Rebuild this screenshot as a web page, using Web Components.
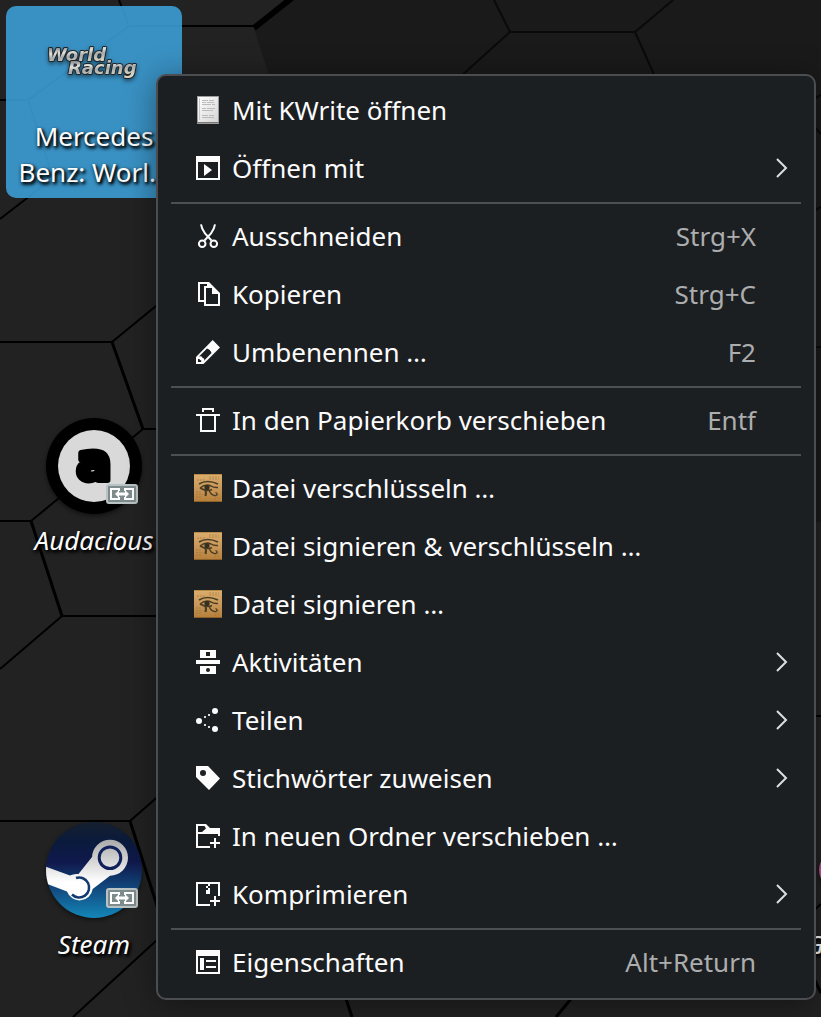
<!DOCTYPE html>
<html lang="de">
<head>
<meta charset="utf-8">
<meta name="viewport" content="width=device-width, initial-scale=1">
<title>Desktop</title>
<style>
  html, body {
    height: 100%;
    margin: 0;
  }
  body {
    background: #222;
    color: #fcfcfc;
    font: 26px/36px "Noto Sans", "Open Sans", sans-serif;
    overflow: hidden;
  }
</style>
</head>
<body>
<desktop-view>
  <desktop-icon icon="racing" row="1" selected>Mercedes Benz: Worl…</desktop-icon>
  <desktop-icon icon="audacious" row="3" link>Audacious</desktop-icon>
  <desktop-icon icon="steam" row="5" link>Steam</desktop-icon>
  <desktop-icon icon="pink" row="5" column="5" link align="start">G</desktop-icon>

  <context-menu slot="menu" label="Dateiaktionen">
    <menu-entry icon="kwrite">Mit KWrite öffnen</menu-entry>
    <menu-entry icon="open-with" submenu>Öffnen mit</menu-entry>
    <menu-separator></menu-separator>
    <menu-entry icon="cut" shortcut="Strg+X">Ausschneiden</menu-entry>
    <menu-entry icon="copy" shortcut="Strg+C">Kopieren</menu-entry>
    <menu-entry icon="rename" shortcut="F2">Umbenennen …</menu-entry>
    <menu-separator></menu-separator>
    <menu-entry icon="trash" shortcut="Entf">In den Papierkorb verschieben</menu-entry>
    <menu-separator></menu-separator>
    <menu-entry icon="kleopatra">Datei verschlüsseln …</menu-entry>
    <menu-entry icon="kleopatra">Datei signieren &amp; verschlüsseln …</menu-entry>
    <menu-entry icon="kleopatra">Datei signieren …</menu-entry>
    <menu-entry icon="activities" submenu>Aktivitäten</menu-entry>
    <menu-entry icon="share" submenu>Teilen</menu-entry>
    <menu-entry icon="tag" submenu>Stichwörter zuweisen</menu-entry>
    <menu-entry icon="folder-new">In neuen Ordner verschieben …</menu-entry>
    <menu-entry icon="compress" submenu>Komprimieren</menu-entry>
    <menu-separator></menu-separator>
    <menu-entry icon="properties" shortcut="Alt+Return">Eigenschaften</menu-entry>
  </context-menu>
</desktop-view>

<script>
// 28x28 menu icons
const MENU_ICONS = {
  "kwrite": `
    <defs><linearGradient id="p" x2="1" y2="1"><stop stop-color="#fff"/><stop offset="1" stop-color="#d5d5d5"/></linearGradient></defs>
    <rect x="3" y="0" width="22" height="28" fill="#9d9d9d"/>
    <rect x="4" y="1" width="20" height="25" fill="url(#p)"/>
    <path d="M3 26.5H25" stroke="#777"/>
    <path d="M8 4.5h6m1 0h5M8 6.5h4m1 0h7M8 8.5h9m1 0h3M8 12.5h4m1 0h8M8 14.5h11M8 19.5h6m1 0h5M8 21.5h12" stroke="#bbb" fill="none"/>
    <path d="M5.5 2v22" stroke="#c9c9c9"/>`,
  "open-with": `
    <path d="M2 2H26V26H2ZM4 8V24H24V8Z" fill-rule="evenodd"/>
    <path d="M10 10L18 16L10 22Z"/>`,
  "cut": `
    <g fill="none" stroke="#fcfcfc" stroke-width="2">
      <path d="M7 2.300C7.500 6 9 8.500 11 11.500L17.500 18.500M21 2.300C20.500 6 19 8.500 17 11.500L10.500 18.500"/>
      <circle cx="8.200" cy="21.700" r="3.300"/><circle cx="19.800" cy="21.700" r="3.300"/>
    </g>`,
  "copy": `
    <path d="M4 2H15L19 6H13V4H6V20H10V22H4Z"/>
    <path d="M10 6H19L26 13V26H10ZM12 8V24H24V14H18V8Z" fill-rule="evenodd"/>`,
  "rename": `
    <path d="M18.700 2L26 9.500L9.500 26H2V19ZM13 10.500L5 18.500Q8.500 17.500 8.500 20Q11 20 10 22.800L17.500 15Q16.500 11.500 13 10.500ZM4 21V24H7Q8 22 6 22Q6 20.500 4 21Z" fill-rule="evenodd"/>`,
  "trash": `
    <path d="M8 6V2H20V6H18V4H10V6ZM2 8H26V10H22V26H6V10H2ZM8 10V24H20V10Z" fill-rule="evenodd"/>`,
  "kleopatra": `
    <defs><linearGradient id="g" x2="0" y2="1"><stop stop-color="#dcae6c"/><stop offset=".5" stop-color="#c9985a"/><stop offset="1" stop-color="#b47f39"/></linearGradient></defs>
    <rect width="28" height="28" fill="url(#g)"/>
    <path d="M0 .5H28" stroke="#b88a49"/><path d="M0 27.500H28" stroke="#8b602b"/>
    <path d="M15 3h10M3 6h8M15 5h10M2 18h6M2 20.500h7M2 23h6M21 21v5M24 20v6" stroke="#9a733c" stroke-dasharray="2 1" opacity=".6"/>
    <g fill="none" stroke="#4a3d25">
      <path d="M5 10Q13 5 24 10" stroke-width="1.500"/>
      <path d="M6 14Q12 9.500 17 12Q20 14 24 13.500M6 14Q13 18 18 15.500" stroke-width="1.500"/>
      <path d="M15 16Q17 22 22 21.500Q24.500 19.500 21.500 18.500" stroke-width="1.300"/>
      <path d="M11.500 16Q12.500 19 11.500 22" stroke-width="2.200"/>
    </g>
    <circle cx="13" cy="13.500" r="2.600" fill="#352f1f"/>`,
  "activities": `
    <path d="M6 2H22V10H6ZM12 4V8H16V4Z" fill-rule="evenodd"/>
    <path d="M2 12H26V16H2Z"/>
    <path d="M6 18H22V26H6ZM14 20a2 2 0 1 0 0 4a2 2 0 1 0 0-4Z" fill-rule="evenodd"/>`,
  "share": `
    <circle cx="5" cy="15" r="3"/><circle cx="21" cy="5" r="3"/><circle cx="21" cy="23" r="3"/>
    <path d="M10 10h2v2h-2zM14 8h2v2h-2zM10 18h2v2h-2zM14 20h2v2h-2z" opacity=".85"/>`,
  "tag": `
    <path d="M2 2H14L26 14.500L15 26L2 13ZM9 6a3 3 0 1 0 0 6a3 3 0 1 0 0-6Z" fill-rule="evenodd"/>`,
  "folder-new": `
    <path d="M2 2H12L16 6H26V14H24V12H4V24H16V26H2ZM4 4V10H8L12 6.500L10.500 4Z" fill-rule="evenodd"/>
    <path d="M20 16h2v4h4v2h-4v4h-2v-4h-4v-2h4z"/>`,
  "compress": `
    <path d="M2 2H26V16H24V4H4V24H16V26H2Z"/>
    <path d="M14 4h2v2h-2zM12 6h2v2h-2zM14 8h2v2h-2zM12 10h4v4h-4z"/>
    <path d="M20 16h2v4h4v2h-4v4h-2v-4h-4v-2h4z"/>`,
  "properties": `
    <path d="M2 2H26V26H2ZM4 8V24H24V8Z" fill-rule="evenodd"/>
    <path d="M6 10h4v12H6zM12 12h10v2H12zM12 18h10v2H12z"/>`,
};

// 96x96 desktop icons
const APP_ICONS = {
  "racing": `
    <defs><linearGradient id="m" x2=".3" y2="1"><stop offset=".2" stop-color="#85898b"/><stop offset=".45" stop-color="#e4e4dc"/><stop offset=".65" stop-color="#a5aaab"/><stop offset="1" stop-color="#dcd8c8"/></linearGradient></defs>
    <g font-family="DejaVu Sans, sans-serif" font-weight="700" font-style="italic" font-size="18" fill="url(#m)" stroke="#20262a" stroke-width="2" stroke-linejoin="bevel" paint-order="stroke">
      <text x="1" y="47">World</text>
      <text x="22" y="60">Racing</text>
    </g>`,
  "audacious": `
    <circle cx="48" cy="48" r="48" fill="#000"/>
    <circle cx="48" cy="48" r="36" fill="#d9d9d9"/>
    <text x="48" y="62" text-anchor="middle" font-family="DejaVu Sans, sans-serif" font-style="normal" font-weight="700" font-size="52" fill="#000" stroke="#000" stroke-width="6" stroke-linejoin="round">a</text>`,
  "steam": `
    <defs>
      <linearGradient id="s" x2="0" y2="1"><stop stop-color="#15202f"/><stop offset=".2" stop-color="#0a1a3c"/><stop offset=".42" stop-color="#10194d"/><stop offset=".7" stop-color="#124b80"/><stop offset="1" stop-color="#1387b8"/></linearGradient>
      <linearGradient id="w" gradientUnits="userSpaceOnUse" x1="0" y1="17" x2="0" y2="60"><stop stop-color="#a9a9a9"/><stop offset="1" stop-color="#fff"/></linearGradient>
      <clipPath id="c"><circle cx="48" cy="48" r="48"/></clipPath>
    </defs>
    <g clip-path="url(#c)">
      <rect width="96" height="96" fill="url(#s)"/>
      <path d="M-1 44.500L24 53.500C27 52 30 52 32.500 52L46 35H64V53.700L46.700 67A13.300 13.300 0 0 1 21 69.500L-1 61Z" fill="url(#w)"/>
      <circle cx="64" cy="35.700" r="18" fill="url(#w)"/>
      <circle cx="64" cy="35.700" r="10.800" fill="none" stroke="#10205a" stroke-width="3"/>
      <path d="M30 56A10 10 0 1 1 26 72.500" fill="none" stroke="#123a70" stroke-width="2.500"/>
    </g>`,
  "pink": `<circle cx="48" cy="48" r="19" fill="#c0509a"/>`,
};

class DesktopView extends HTMLElement {
  constructor() {
    super();
    this.attachShadow({ mode: "open" }).innerHTML = `
      <style>
        :host {
          display: block;
          position: relative;
          min-height: 100%;
          overflow: hidden;
        }
        .wallpaper {
          position: absolute;
          inset: 0;
          width: 100%;
          height: 100%;
        }
        .icons {
          position: relative;
          display: grid;
          grid-template-columns: repeat(5, 176px);
          grid-auto-rows: 192px;
          gap: 10px;
          padding: 6px;
        }
      </style>
      <svg class="wallpaper" viewBox="0 0 821 1017" preserveAspectRatio="xMinYMin slice" aria-hidden="true">
        <rect width="821" height="1017" fill="#222"/>
        <path d="M291 0L254 28L340 300V522H821V0Z" fill="#1a1a1a"/>
        <g fill="none" stroke="#000" stroke-width="2">
          <path d="M119 0L129 26H254M129 26L28 100H0M28 100L53 178L0 219"/>
          <path d="M0 342H112L156 306L180 290M143 429H170M143 429L31 521H0M62 616H170M62 616L0 669"/>
          <path d="M0 821H130L170 786M170 928L73 1017"/>
          <path d="M810 716H821M810 914L821 904"/>
        </g>
        <path d="M112 342L143 429M31 521L62 616M130 821L160 915M340 980L352 1017M590 976L556 1017M810 970L821 993" fill="none" stroke="#000" stroke-width="3"/>
        <path d="M293 -3L254 28" stroke="#000" stroke-width="6"/>
        <path d="M494 0L510 32H635L673 0M510 32L440 95M635 32L670 110M810 101L821 95M810 122L821 134M810 213L821 207M810 347H821" fill="none" stroke="#0a0a0a" stroke-width="2"/>
      </svg>
      <div class="icons"><slot></slot></div>
      <slot name="menu"></slot>
    `;
  }
}

class DesktopIcon extends HTMLElement {
  constructor() {
    super();
    this.attachShadow({ mode: "open" });
  }

  connectedCallback() {
    this.style.gridRow = this.getAttribute("row") || "auto";
    this.style.gridColumn = this.getAttribute("column") || "1";
    this.render();
  }

  render() {
    this.shadowRoot.innerHTML = `
      <style>
        :host { display: block; min-width: 0; }
        button {
          display: flex;
          flex-direction: column;
          align-items: center;
          gap: 8px;
          width: 100%;
          height: 100%;
          padding: 8px;
          border: 0;
          border-radius: 10px;
          background: none;
          color: inherit;
          font: inherit;
        }
        :host([selected]) button { background: rgba(61, 162, 219, 0.87); }
        :host([link]) button { font-style: italic; }
        :host([align="start"]) .name { align-self: flex-start; padding-left: 48px; }
        .picture {
          position: relative;
          width: 96px;
          height: 96px;
        }
        .picture svg { display: block; overflow: visible; filter: drop-shadow(0 2px 2px rgba(0, 0, 0, 0.5)); }
        .picture .badge {
          position: absolute;
          right: 4px;
          bottom: 10px;
          filter: none;
        }
        .name { text-shadow: 2px 2px 3px #000, 1px 2px 4px #000; }
      </style>
      <button type="button">
        <span class="picture">
          <svg width="96" height="96" viewBox="0 0 96 96" aria-hidden="true">${APP_ICONS[this.getAttribute("icon")]}</svg>
          ${this.hasAttribute("link") ? this.badge() : ""}
        </span>
        <span class="name"><slot></slot></span>
      </button>
    `;
  }

  badge() {
    return `
      <svg class="badge" width="32" height="20" viewBox="0 0 32 20" aria-hidden="true">
        <rect x="1" y="1" width="30" height="18" rx="2" fill="#7f8c8d" stroke="#b9c3c3" stroke-width="2"/>
        <path d="M13 7V5H5V15H13V13M19 7V5H27V15H19V13" fill="none" stroke="#fff" stroke-width="2"/>
        <path d="M11 10H21" stroke="#fff" stroke-width="3"/>
        <path d="M9 10l4-4v8zM23 10l-4-4v8z" fill="#fff"/>
      </svg>`;
  }
}

class ContextMenu extends HTMLElement {
  constructor() {
    super();
    this.attachShadow({ mode: "open" }).innerHTML = `
      <style>
        :host {
          position: absolute;
          top: 74px;
          left: 156px;
          right: 5px;
          display: block;
          box-sizing: border-box;
          padding: 5px 0 7px;
          border: 2px solid #4b4d50;
          border-radius: 10px;
          background: #1c1f22;
          box-shadow: 0 4px 32px rgba(0, 0, 0, 0.4);
        }
      </style>
      <slot></slot>
    `;
  }

  connectedCallback() {
    this.setAttribute("role", "menu");
    this.setAttribute("aria-label", this.getAttribute("label") || "");
  }
}

class MenuEntry extends HTMLElement {
  constructor() {
    super();
    this.attachShadow({ mode: "open" });
  }

  connectedCallback() {
    const shortcut = this.getAttribute("shortcut");
    this.shadowRoot.innerHTML = `
      <style>
        :host { display: block; }
        button {
          display: grid;
          grid-template-columns: 28px 1fr auto 12px;
          align-items: center;
          width: 100%;
          height: 58px;
          padding: 0 26px 0 36px;
          border: 0;
          background: none;
          color: inherit;
          font: inherit;
          text-align: left;
        }
        button:hover { background: rgba(61, 174, 233, 0.25); }
        svg { display: block; fill: #fcfcfc; }
        .label { padding-left: 10px; white-space: nowrap; }
        .shortcut { padding-right: 20px; color: #acadae; }
        .arrow { grid-column: 4; fill: none; stroke: #dedede; stroke-width: 2; }
      </style>
      <button type="button" role="menuitem">
        <svg width="28" height="28" viewBox="0 0 28 28" aria-hidden="true">${MENU_ICONS[this.getAttribute("icon")]}</svg>
        <span class="label"><slot></slot></span>
        ${shortcut ? `<span class="shortcut">${shortcut}</span>` : ""}
        ${this.hasAttribute("submenu") ? `<svg class="arrow" width="12" height="20" viewBox="0 0 12 20" aria-hidden="true"><path d="M1 1L10 10L1 19"/></svg>` : ""}
      </button>
    `;
  }
}

class MenuSeparator extends HTMLElement {
  constructor() {
    super();
    this.attachShadow({ mode: "open" }).innerHTML = `
      <style>
        :host {
          display: block;
          height: 2px;
          margin: 5px 13px 3px;
          background: #4d4f51;
        }
      </style>
    `;
  }
}

customElements.define("desktop-view", DesktopView);
customElements.define("desktop-icon", DesktopIcon);
customElements.define("context-menu", ContextMenu);
customElements.define("menu-entry", MenuEntry);
customElements.define("menu-separator", MenuSeparator);
</script>
</body>
</html>
